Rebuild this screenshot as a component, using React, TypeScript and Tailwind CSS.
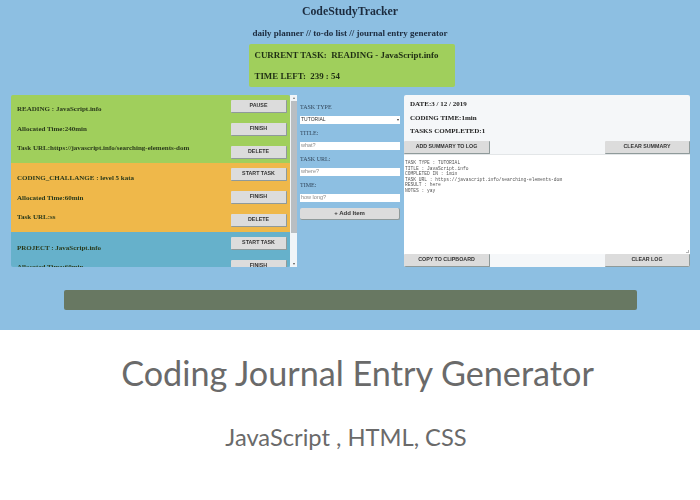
const serif = "font-['Liberation_Serif',serif]";
const sans = "font-['Liberation_Sans',sans-serif]";

function Btn({ label, w = "w-[56px] h-[12.5px]" }: { label: string; w?: string }) {
  return (
    <div className={`${w} bg-[#dcdcdc] rounded-[1px] border-b border-r border-[#8f9a9a] flex items-center justify-center text-[5.3px] font-bold leading-none text-[#333] ${sans}`}>
      {label}
    </div>
  );
}

function Task({ bg, title, time, url, first, h, textTop, gap = "gap-[12px]" }: { bg: string; title: string; time: string; url: string; first: string; h: string; textTop: string; gap?: string }) {
  return (
    <div className={`${bg} ${h} shrink-0 flex justify-between pl-[6px] pr-[3px] pt-[5px] ${serif} font-bold text-[7px] text-[#2a3a1c]`}>
      <div className={`flex flex-col ${textTop} ${gap}`}>
        <div className="h-[8px] leading-[8px]">{title}</div>
        <div className="h-[8px] leading-[8px]">{time}</div>
        <div className="h-[8px] leading-[8px] -mt-[1px]">{url}</div>
      </div>
      <div className="flex flex-col gap-[10.5px]">
        <Btn label={first} />
        <Btn label="FINISH" />
        <Btn label="DELETE" />
      </div>
    </div>
  );
}

function Field({ label, ph }: { label: string; ph: string }) {
  return (
    <div className="flex flex-col">
      <div className={`${serif} text-[6px] leading-[8px] text-[#33475c]`}>{label}</div>
      <div className={`mt-[5.5px] h-[7.5px] w-[100px] bg-white ${sans} text-[5.5px] leading-[7.5px] text-[#8a8a8a] pl-[1px]`}>{ph}</div>
    </div>
  );
}

export default function App() {
  return (
    <div className="w-[700px] h-[500px] bg-white overflow-hidden flex flex-col">
      <div className="h-[330px] bg-[#8dbfe2] flex flex-col items-center blur-[0.4px]">
        <div className={`${serif} font-bold text-[11.8px] leading-[13px] mt-[5px] text-[#1c2b3e]`}>CodeStudyTracker</div>
        <div className={`${serif} font-bold text-[9px] leading-[9px] mt-[11px] text-[#1c2b3e]`}>daily planner // to-do list // journal entry generator</div>
        <div className={`mt-[6px] ml-[3px] w-[206px] h-[43px] bg-[#a0cf5c] rounded-[2px] pl-[6px] pt-[6px] ${serif} font-bold text-[8.9px] text-[#1f2f14] flex flex-col gap-[11px]`}>
          <div className="leading-[10px] whitespace-pre">CURRENT TASK:  READING - JavaScript.info</div>
          <div className="leading-[10px] whitespace-pre">TIME LEFT:  239 : 54</div>
        </div>

        <div className="mt-[8px] w-[679px] h-[172px] flex self-start ml-[11px]">
          <div className="w-[279px] h-[172px] flex flex-col overflow-hidden rounded-[2px]">
            <Task bg="bg-[#a0cf5c]" h="h-[68px]" textTop="pt-[5px]" title="READING : JavaScript.info" time="Allocated Time:240min" url="Task URL:https://javascript.info/searching-elements-dom" first="PAUSE" />
            <Task bg="bg-[#efb84a]" h="h-[69px]" textTop="pt-[6px]" title="CODING_CHALLANGE : level 5 kata" time="Allocated Time:60min" url="Task URL:ss" first="START TASK" />
            <Task bg="bg-[#66b1cb]" h="h-[69px]" textTop="pt-[6.5px]" gap="gap-[11px]" title="PROJECT : JavaScript.info" time="Allocated Time:60min" url="" first="START TASK" />
          </div>
          <div className="w-[7px] h-[172px] bg-[#f1f5f8] flex flex-col items-center">
            <div className="h-[6px] text-[4px] leading-[6px] text-[#777]">▴</div>
            <div className="w-[6px] h-[132px] bg-[#b9bec2]" />
            <div className="flex-1" />
            <div className="h-[6px] text-[4px] leading-[6px] text-[#555]">▾</div>
          </div>

          <div className="ml-[3px] w-[100px] flex flex-col pt-[8px]">
            <div className={`${serif} text-[6px] leading-[8px] text-[#33475c]`}>TASK TYPE</div>
            <div className={`mt-[5px] h-[7.5px] w-[100px] bg-white flex justify-between items-center px-[1px] ${sans} text-[5px] text-[#333]`}>
              <span>TUTORIAL</span>
              <span className="text-[4px]">▾</span>
            </div>
            <div className="mt-[5px] flex flex-col gap-[5px]">
              <Field label="TITLE:" ph="what?" />
              <Field label="TASK URL:" ph="where?" />
              <Field label="TIME:" ph="how long?" />
            </div>
            <div className={`mt-[6px] h-[12.5px] w-[100px] bg-[#dcdcdc] rounded-[2px] border-b border-r border-[#8f9a9a] flex items-center justify-center ${sans} font-bold text-[6px] text-[#333]`}>
              + Add Item
            </div>
          </div>

          <div className="ml-[4px] w-[286px] h-[172px] bg-[#f5f7f9] rounded-[2px] flex flex-col overflow-hidden">
            <div className={`h-[46px] pl-[6px] pt-[5px] flex flex-col gap-[4.5px] ${serif} font-bold text-[7px] text-[#222]`}>
              <div className="leading-[9px]">DATE:3 / 12 / 2019</div>
              <div className="leading-[9px]">CODING TIME:1min</div>
              <div className="leading-[9px]">TASKS COMPLETED:1</div>
            </div>
            <div className="flex justify-between h-[13px] shrink-0">
              <Btn label="ADD SUMMARY TO LOG" w="w-[86px] h-[13px]" />
              <Btn label="CLEAR SUMMARY" w="w-[85px] h-[13px]" />
            </div>
            <div className="relative h-[100px] bg-white border-t border-[#e3e6e8] pl-[1px] pt-[5px] font-['Liberation_Mono',monospace] text-[4.6px] leading-[5.6px] text-[#555] whitespace-pre">
              {"TASK TYPE : TUTORIAL\nTITLE : JavaScript.info\nCOMPLETED IN : 1min\nTASK URL : https://javascript.info/searching-elements-dom\nRESULT : here\nNOTES : yay"}
              <div className="absolute right-[1px] bottom-[1px] w-[3px] h-[3px] border-b border-r border-[#b5b5b5]" />
            </div>
            <div className="flex justify-between h-[13px] shrink-0">
              <Btn label="COPY TO CLIPBOARD" w="w-[86px] h-[13px]" />
              <Btn label="CLEAR LOG" w="w-[85px] h-[13px]" />
            </div>
          </div>
        </div>

        <div className="mt-[23px] w-[573px] h-[20px] bg-[#687862] rounded-[2px]" />
      </div>

      <div className="flex-1 flex flex-col items-center font-['Lato',sans-serif] text-[#6a6a6a]">
        <div className="mt-[20px] ml-[15px] text-[34.2px] leading-[46px]">Coding Journal Entry Generator</div>
        <div className="mt-[25px] mr-[8px] text-[23.7px] leading-[32px]">JavaScript , HTML, CSS</div>
      </div>
    </div>
  );
}
